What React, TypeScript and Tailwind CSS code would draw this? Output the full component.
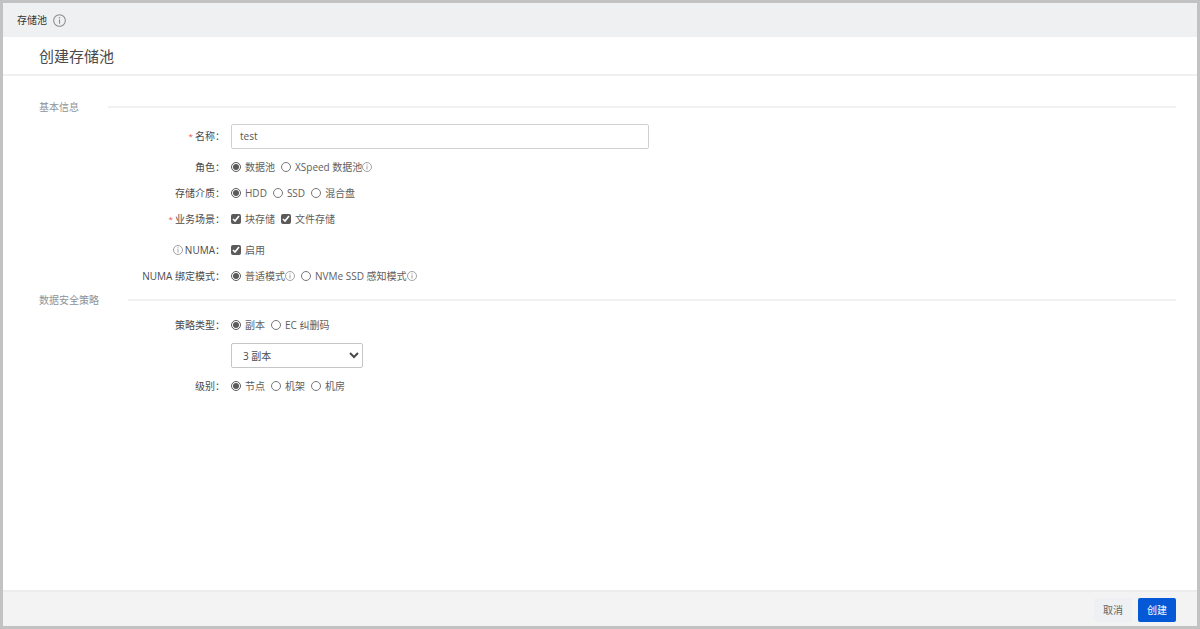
import React from "react";

type InfoIconProps = {
  className?: string;
};

const InfoIcon = ({ className = "size-[10px]" }: InfoIconProps) => (
  <svg
    viewBox="0 0 24 24"
    fill="none"
    stroke="currentColor"
    className={`shrink-0 text-[#8a8a8a] ${className}`}
    aria-hidden="true"
  >
    <circle cx="12" cy="12" r="10.8" strokeWidth="1.9" />
    <path d="M12 10v8" strokeWidth="2" />
    <path d="M12 5.6v2.4" strokeWidth="2.2" />
  </svg>
);

type SectionProps = {
  title: string;
};

const Section = ({ title }: SectionProps) => (
  <div className="flex items-center gap-[29px] h-[22px] pl-9 pr-[21px]">
    <h2 className="shrink-0 text-[10px] text-[#8f9296]">{title}</h2>
    <div className="grow h-[2px] bg-[#f1f1f1]"></div>
  </div>
);

type RowProps = {
  label?: string;
  htmlFor?: string;
  required?: boolean;
  info?: boolean;
  height?: string;
  children: React.ReactNode;
};

const Row = ({
  label,
  htmlFor,
  required,
  info,
  height = "h-[26px]",
  children,
}: RowProps) => (
  <div className={`flex items-center gap-[6px] ${height}`}>
    <div className="w-[222px] shrink-0 flex items-center justify-end gap-[2px] text-[#4a4a4a]">
      {required && <span className="text-[#f0504a] text-[8px]">*</span>}
      {info && <InfoIcon />}
      {label && <label htmlFor={htmlFor}>{label}：</label>}
    </div>
    {children}
  </div>
);

type OptionProps = {
  type?: "radio" | "checkbox";
  name: string;
  label: string;
  checked?: boolean;
  info?: boolean;
};

const Option = ({
  type = "radio",
  name,
  label,
  checked,
  info,
}: OptionProps) => (
  <label className="flex items-center text-[#606060]">
    <input
      type={type}
      name={name}
      defaultChecked={checked}
      className="size-[10px] m-0 mr-1 accent-[#5a5a5a]"
    />
    {label}
    {info && <InfoIcon />}
  </label>
);

const App = () => {
  return (
    <div className="min-h-screen flex bg-[#c2c2c2] p-[3px] text-[10px] leading-4 font-['Open_Sans','Noto_Sans_CJK_SC',sans-serif]">
      <div className="grow flex flex-col bg-white">
        <header className="flex items-center gap-[6px] h-[34px] pl-[14px] bg-[#eff0f2] text-[#333]">
          <span>存储池</span>
          <InfoIcon className="size-[13px]" />
        </header>
        <div className="flex items-center h-[39px] pl-9 border-b-2 border-[#f0f0f0]">
          <h1 className="text-[15px] text-[#4a4a4a]">创建存储池</h1>
        </div>
        <form className="grow flex flex-col">
          <main className="grow pt-5">
            <Section title="基本信息" />
            <Row label="名称" htmlFor="name" required height="h-9">
              <input
                id="name"
                type="text"
                defaultValue="test"
                className="w-[35%] h-[25px] px-2 border border-[#d0d0d0] rounded-[2px] text-[#555] outline-none"
              />
            </Row>
            <Row label="角色">
              <div className="flex gap-[6px]">
                <Option name="role" label="数据池" checked />
                <Option name="role" label="XSpeed 数据池" info />
              </div>
            </Row>
            <Row label="存储介质">
              <div className="flex gap-[6px]">
                <Option name="media" label="HDD" checked />
                <Option name="media" label="SSD" />
                <Option name="media" label="混合盘" />
              </div>
            </Row>
            <Row label="业务场景" required>
              <div className="flex gap-[6px]">
                <Option type="checkbox" name="block" label="块存储" checked />
                <Option type="checkbox" name="file" label="文件存储" checked />
              </div>
            </Row>
            <Row label="NUMA" info height="h-9">
              <Option type="checkbox" name="numa" label="启用" checked />
            </Row>
            <Row label="NUMA 绑定模式" height="h-4">
              <div className="flex gap-[6px]">
                <Option name="bind" label="普适模式" checked info />
                <Option name="bind" label="NVMe SSD 感知模式" info />
              </div>
            </Row>
            <div className="pt-[5px] pb-px">
              <Section title="数据安全策略" />
            </div>
            <Row label="策略类型">
              <div className="flex gap-[6px]">
                <Option name="policy" label="副本" checked />
                <Option name="policy" label="EC 纠删码" />
              </div>
            </Row>
            <Row height="h-[35px]">
              <select
                aria-label="副本"
                defaultValue="3"
                className="w-[132px] h-[25px] pl-[7px] border border-[#c6c6c6] rounded-[2px] bg-white text-[#4a4a4a]"
              >
                <option value="2">2 副本</option>
                <option value="3">3 副本</option>
              </select>
            </Row>
            <Row label="级别">
              <div className="flex gap-[6px]">
                <Option name="level" label="节点" checked />
                <Option name="level" label="机架" />
                <Option name="level" label="机房" />
              </div>
            </Row>
          </main>
          <footer className="flex items-center justify-end gap-[6px] h-9 pt-[2px] pr-[21px] border-t-2 border-[#ececec] bg-[#f3f3f3]">
            <button
              type="button"
              className="w-[38px] h-6 rounded-[2px] bg-[#eff0f4] text-[#666]"
            >
              取消
            </button>
            <button
              type="submit"
              className="w-[38px] h-6 rounded-[2px] bg-[#0558d6] text-white"
            >
              创建
            </button>
          </footer>
        </form>
      </div>
    </div>
  );
};

export default App;
